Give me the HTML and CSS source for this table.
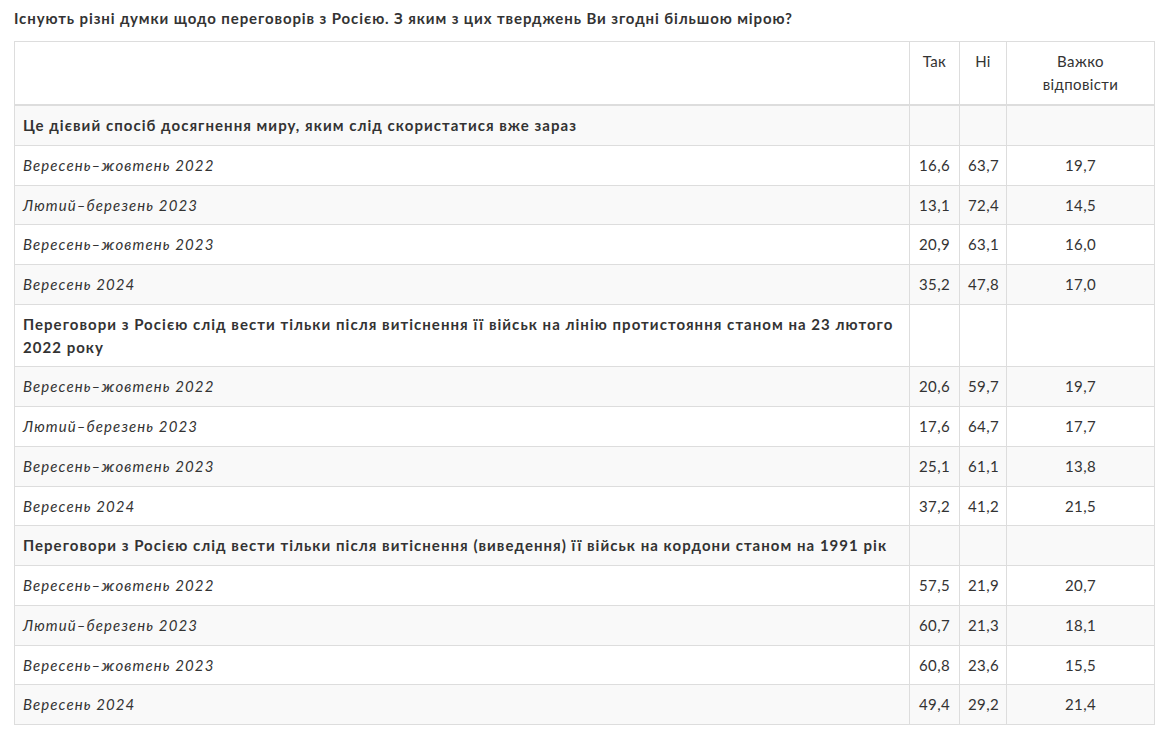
FILE: index.html
```html
<!DOCTYPE html>
<html lang="uk">
<head>
<meta charset="utf-8">
<link rel="stylesheet" href="styles.css">
</head>
<body>
<h4 class="title">Існують різні думки щодо переговорів з Росією. З яким з цих тверджень Ви згодні більшою мірою?</h4>
<table class="data">
<colgroup><col class="c1"><col class="c2"><col class="c3"><col class="c4"></colgroup>
<thead>
<tr><th></th><th>Так</th><th>Ні</th><th>Важко<br>відповісти</th></tr>
</thead>
<tbody>
<tr class="sec"><td>Це дієвий спосіб досягнення миру, яким слід скористатися вже зараз</td><td></td><td></td><td></td></tr>
<tr><td class="per">Вересень–жовтень 2022</td><td>16,6</td><td>63,7</td><td>19,7</td></tr>
<tr><td class="per">Лютий–березень 2023</td><td>13,1</td><td>72,4</td><td>14,5</td></tr>
<tr><td class="per">Вересень–жовтень 2023</td><td>20,9</td><td>63,1</td><td>16,0</td></tr>
<tr><td class="per">Вересень 2024</td><td>35,2</td><td>47,8</td><td>17,0</td></tr>
<tr class="sec"><td>Переговори з Росією слід вести тільки після витіснення її військ на лінію протистояння станом на 23 лютого 2022 року</td><td></td><td></td><td></td></tr>
<tr><td class="per">Вересень–жовтень 2022</td><td>20,6</td><td>59,7</td><td>19,7</td></tr>
<tr><td class="per">Лютий–березень 2023</td><td>17,6</td><td>64,7</td><td>17,7</td></tr>
<tr><td class="per">Вересень–жовтень 2023</td><td>25,1</td><td>61,1</td><td>13,8</td></tr>
<tr><td class="per">Вересень 2024</td><td>37,2</td><td>41,2</td><td>21,5</td></tr>
<tr class="sec"><td>Переговори з Росією слід вести тільки після витіснення (виведення) її військ на кордони станом на 1991 рік</td><td></td><td></td><td></td></tr>
<tr><td class="per">Вересень–жовтень 2022</td><td>57,5</td><td>21,9</td><td>20,7</td></tr>
<tr><td class="per">Лютий–березень 2023</td><td>60,7</td><td>21,3</td><td>18,1</td></tr>
<tr><td class="per">Вересень–жовтень 2023</td><td>60,8</td><td>23,6</td><td>15,5</td></tr>
<tr><td class="per">Вересень 2024</td><td>49,4</td><td>29,2</td><td>21,4</td></tr>
</tbody>
</table>
</body>
</html>
```

FILE: styles.css
```css
html, body { margin: 0; padding: 0; background: #fff; }
body {
  padding: 7px 9px 8px 14px;
  font-family: Lato, "Open Sans", sans-serif;
  font-size: 15px;
  letter-spacing: 0.55px;
  color: #333;
}
.title {
  margin: 0 0 11px;
  font-size: 15px;
  font-weight: 700;
  line-height: 23px;
  color: #333;
  letter-spacing: 0.9px;
}
.data {
  width: 1140px;
  border-collapse: collapse;
  table-layout: fixed;
  border: 1px solid #ddd;
}
.c1 { width: 895px; }
.c2 { width: 50px; }
.c3 { width: 47px; }
.c4 { width: 148px; }
.data th, .data td {
  border: 1px solid #ddd;
  padding: 8px;
  line-height: 22.75px;
  vertical-align: top;
  text-align: center;
  font-weight: 400;
  letter-spacing: 0.4px;
}
.data thead th { border-bottom: 2px solid #ddd; height: 46px; line-height: 23px; }
.data td:first-child { text-align: left; }
.data tbody tr:nth-child(odd) { background: #f9f9f9; }
.data .sec td:first-child { font-weight: 700; letter-spacing: 1.04px; }
.data td.per { font-style: italic; letter-spacing: 1.1px; }
```
